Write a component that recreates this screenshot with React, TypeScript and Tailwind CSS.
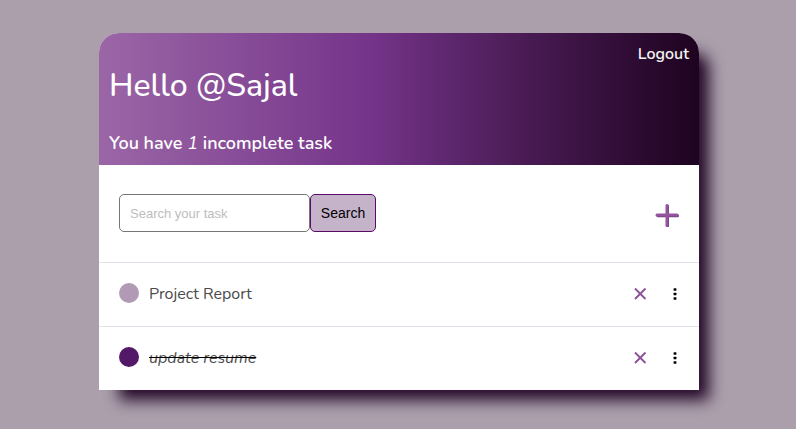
type Task = { id: number; title: string; complete: boolean };

const tasks: Task[] = [
  { id: 1, title: "Project Report", complete: false },
  { id: 2, title: "update resume", complete: true },
];

function Header({ user, count }: { user: string; count: number }) {
  return (
    <header className="flex items-start justify-between rounded-t-[20px] bg-linear-to-r from-[#9b66a6] via-[#75348a] via-45% to-[#1e0420] px-2.5 pt-2 pb-2.5 text-white">
      <div className="pt-5">
        <h1 className="text-[32px] leading-[50px] font-medium">Hello @{user}</h1>
        <h2 className="mt-5 text-lg leading-6 font-semibold">
          You have <i className="font-normal">{count}</i> incomplete task
        </h2>
      </div>
      <a href="#logout" className="text-base leading-[26px] font-semibold text-[#f5f5f5]">
        Logout
      </a>
    </header>
  );
}

function SearchBar() {
  return (
    <div className="flex items-center justify-between px-5 pt-[29px] pb-[30px]">
      <form className="flex font-['Liberation_Sans',Arial,sans-serif]" onSubmit={(e) => e.preventDefault()}>
        <input
          type="text"
          aria-label="Search your task"
          placeholder="Search your task"
          className="h-[38px] w-[191px] rounded-[5px] border border-[#767676] px-2.5 text-[13px] placeholder:text-[#bdbdbd]"
        />
        <button
          type="submit"
          className="h-[38px] w-[66px] rounded-[5px] border border-[#5b0a68] bg-[#c5b3ca] text-sm text-black"
        >
          Search
        </button>
      </form>
      <button type="button" aria-label="Add task" className="mt-1">
        <svg width="24" height="24" viewBox="0 0 24 24" fill="none" strokeLinecap="round">
          <path d="M12.500 3v20M3 12.800h19.500" stroke="#6f3f79" strokeWidth="3" />
          <path d="M12 2.500v20M2 12h20" stroke="#95539f" strokeWidth="3" />
        </svg>
      </button>
    </div>
  );
}

function TaskRow({ task }: { task: Task }) {
  return (
    <li className="flex h-16 items-center border-t border-[#dfe4ea] px-5 pb-0.5">
      <button
        type="button"
        aria-label={task.complete ? "Mark incomplete" : "Mark complete"}
        className={task.complete ? "mb-0.5 size-5 rounded-full bg-[#541868]" : "mb-0.5 size-5 rounded-full bg-[#b09ab4]"}
      />
      <span
        className={
          task.complete
            ? "ml-2.5 flex-1 text-base text-[#4b4b4b] italic line-through decoration-black"
            : "ml-2.5 flex-1 text-base text-[#4b4b4b]"
        }
      >
        {task.title}
      </span>
      <button type="button" aria-label="Delete task" className="mr-6">
        <svg width="14" height="14" viewBox="0 0 14 14" fill="none" stroke="#8b4f98" strokeWidth="1.8">
          <path d="M2 1.500l10.500 10.500M12.500 1.500L2 12" />
        </svg>
      </button>
      <button type="button" aria-label="Task options">
        <svg width="8" height="14" viewBox="0 0 8 14" fill="#000">
          <rect x="2.600" y="1.200" width="2.800" height="2.600" rx="0.6" />
          <rect x="2.600" y="5.700" width="2.800" height="2.600" rx="0.6" />
          <rect x="2.600" y="10.200" width="2.800" height="2.600" rx="0.6" />
        </svg>
      </button>
    </li>
  );
}

export default function App() {
  return (
    <div className="min-h-screen bg-[#ab9fac] pt-[33px] pb-[39px] pl-0.5 font-[Nunito,Lato,sans-serif]">
      <main className="mx-auto max-w-[600px] rounded-t-[20px] bg-white shadow-[15px_15px_15px_-5px_#240828]">
        <Header user="Sajal" count={tasks.filter((t) => !t.complete).length} />
        <SearchBar />
        <ul>
          {tasks.map((task) => (
            <TaskRow key={task.id} task={task} />
          ))}
        </ul>
      </main>
    </div>
  );
}
